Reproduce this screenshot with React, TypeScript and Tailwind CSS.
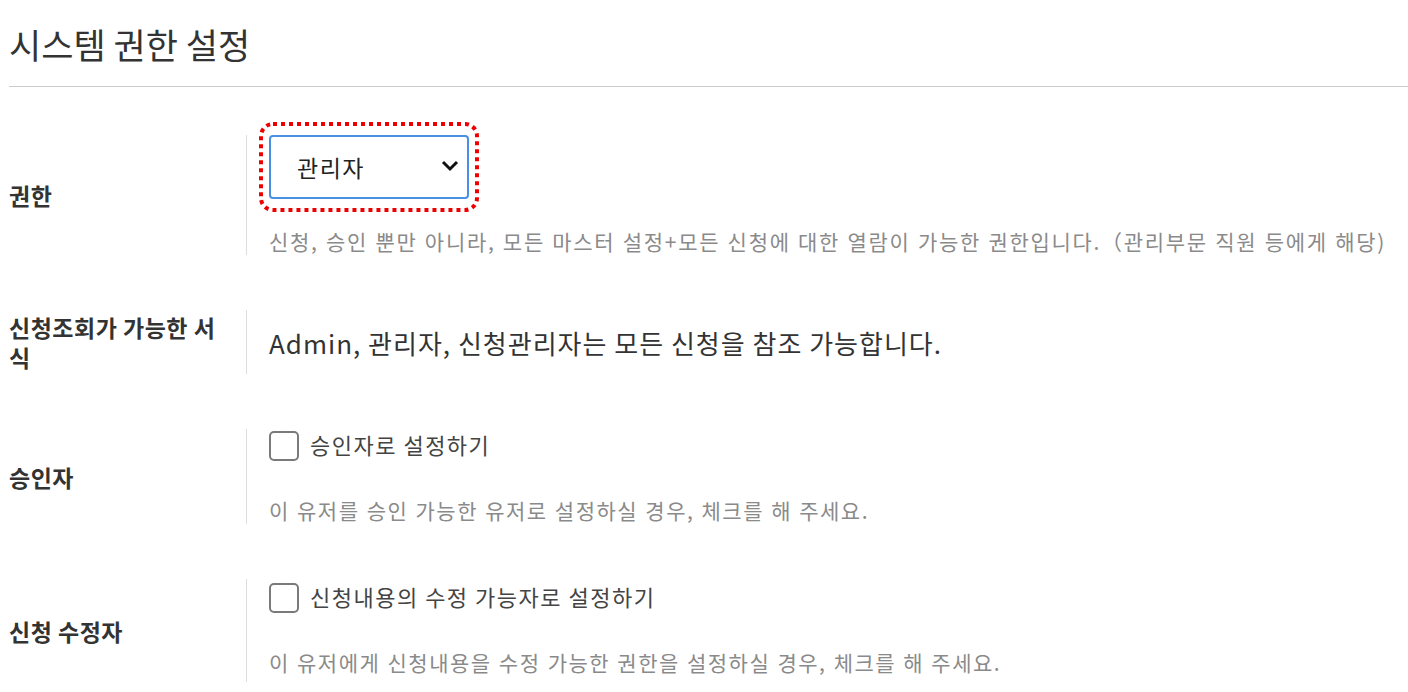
import React from 'react';

const FONT = { fontFamily: '"Noto Sans CJK KR", "Noto Sans", sans-serif' };

function Row({ label, children }: { label: React.ReactNode; children: React.ReactNode }) {
  return (
    <div className="flex items-center">
      <div className="w-[237px] shrink-0 pr-[20px] text-[23px] font-bold leading-[30px] tracking-[0.5px] text-[#333]">
        {label}
      </div>
      <div className="self-stretch border-l border-[#dddddd] pl-[22px]">{children}</div>
    </div>
  );
}

function Checkbox({ text }: { text: string }) {
  return (
    <label className="flex items-center gap-[11px] h-[32px]">
      <span className="w-[30px] h-[30px] shrink-0 rounded-[5px] border-2 border-[#7a7a7a] bg-white" />
      <span className="text-[22px] leading-[27px] tracking-[1.5px] text-[#444] -mt-[4px]">{text}</span>
    </label>
  );
}

const DESC = 'text-[21px] leading-[27px] tracking-[1.5px] [word-spacing:1px] text-[#8a8a8a] whitespace-nowrap';

export default function App() {
  return (
    <div className="min-h-[692px] bg-white pl-[9px]" style={FONT}>
      <h1 className="pt-[22px] pb-[20px] text-[35px] leading-[44px] font-normal text-[#333]">시스템 권한 설정</h1>
      <hr className="border-0 border-t border-[#cccccc]" />

      <div className="mt-[48px] flex flex-col gap-[55px]">
        <Row label="권한">
          <div className="relative w-[200px] h-[64px]">
            <select
              defaultValue="admin"
              className="w-full h-full appearance-none rounded-[4px] border-2 border-[#4a90e2] bg-white pl-[26px] text-[23px] tracking-[1.5px] text-[#222] outline-none"
              style={FONT}
            >
              <option value="admin">관리자</option>
              <option value="user">일반 사용자</option>
            </select>
            <svg className="pointer-events-none absolute right-[10px] top-[25px]" width="18" height="12" viewBox="0 0 18 12">
              <path d="M2 2 L9 9 L16 2" fill="none" stroke="#111" strokeWidth="3" />
            </svg>
            <svg className="pointer-events-none absolute -left-[10px] -top-[13px]" width="220" height="90" viewBox="0 0 220 90">
              <rect x="2" y="2" width="216" height="86" rx="12" ry="12" fill="none" stroke="#ee0000" strokeWidth="4" strokeDasharray="4 4" />
            </svg>
          </div>
          <p className={`mt-[29px] ${DESC} tracking-[1.7px]`}>
            신청, 승인 뿐만 아니라, 모든 마스터 설정+모든 신청에 대한 열람이 가능한 권한입니다.（관리부문 직원 등에게 해당)
          </p>
        </Row>

        <Row
          label={
            <>
              신청조회가 가능한 서<br />식
            </>
          }
        >
          <div className="flex h-[64px] items-center text-[26px] tracking-[1px] text-[#333]">
            Admin, 관리자, 신청관리자는 모든 신청을 참조 가능합니다.
          </div>
        </Row>

        <Row label="승인자">
          <div className="pt-[1px]">
            <Checkbox text="승인자로 설정하기" />
            <p className={`mt-[35px] ${DESC}`}>이 유저를 승인 가능한 유저로 설정하실 경우, 체크를 해 주세요.</p>
          </div>
        </Row>

        <Row label="신청 수정자">
          <div className="pt-[3px] pb-[6px]">
            <Checkbox text="신청내용의 수정 가능자로 설정하기" />
            <p className={`mt-[35px] ${DESC}`}>
              이 유저에게 신청내용을 수정 가능한 권한을 설정하실 경우, 체크를 해 주세요.
            </p>
          </div>
        </Row>
      </div>
    </div>
  );
}
